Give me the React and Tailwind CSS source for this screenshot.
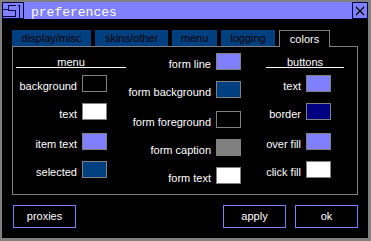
const swatch = "w-[25px] h-[17px] border border-[#808080] shrink-0";

const Row = ({ label, color, labelW, mt }) => (
  <div className={`flex items-end ${mt}`}>
    <span className={`${labelW} text-right leading-[12px] text-white`}>{label}</span>
    <div className={`${swatch} ml-[5px]`} style={{ background: color }} />
  </div>
);

const Logo = () => (
  <svg width="22" height="17" viewBox="0 0 22 17" className="shrink-0">
    <g stroke="#000040" strokeWidth="1" fill="none" shapeRendering="crispEdges">
      <path d="M0.5 0.5 H21.5 V16.5 H0.5 Z" />
      <path d="M0.5 7.5 H5.5" />
      <path d="M13.5 3.5 H6.5 V8.5 H13.5 V14.5 H0.5" />
      <path d="M15.5 3.5 H17.5 V16.5" />
    </g>
  </svg>
);

export default function App() {
  return (
    <div className="w-[371px] h-[241px] bg-[#808080] pl-[2px] pt-[2px] pr-[3px] pb-[3px] font-['Liberation_Sans',Arial,sans-serif] text-[11px]">
      <div className="w-full h-full bg-black flex flex-col">
        {/* title bar */}
        <div className="h-[17px] bg-[#8080ff] flex items-start shrink-0">
          <Logo />
          <span className="ml-[7px] mt-[3px] leading-[15px] text-white text-[13px] font-['Liberation_Mono',monospace]">
            preferences
          </span>
          <div className="ml-auto w-[16px] h-[17px] border border-[#000040] flex items-center justify-center">
            <svg width="10" height="10" viewBox="0 0 10 10">
              <path d="M1 1 L9 9 M9 1 L1 9" stroke="#000" strokeWidth="1.3" />
            </svg>
          </div>
        </div>

        {/* tabs */}
        <div className="flex items-end gap-[4px] ml-[10px] mt-[11px] h-[16px] relative z-10">
          <div className="w-[79px] h-[16px] bg-[#004080] text-black flex items-center justify-center">display/misc</div>
          <div className="w-[73px] h-[16px] bg-[#004080] text-black flex items-center justify-center">skins/other</div>
          <div className="w-[45px] h-[16px] bg-[#004080] text-black flex items-center justify-center">menu</div>
          <div className="w-[54px] h-[16px] bg-[#004080] text-black flex items-center justify-center">logging</div>
          <div className="w-[51px] h-[17px] mb-[-1px] bg-black border border-b-0 border-[#808080] text-white flex items-center justify-center">colors</div>
        </div>

        {/* panel */}
        <div className="ml-[10px] w-[346px] h-[149px] border border-[#808080] flex shrink-0">
          <div className="ml-[3px] w-[110px] mt-[6px]">
            <div className="h-[15px] pt-[3px] leading-[12px] border-b border-white text-white text-center">menu</div>
            <Row label="background" color="#000000" labelW="w-[61px]" mt="mt-[7px]" />
            <Row label="text" color="#ffffff" labelW="w-[61px]" mt="mt-[11px]" />
            <Row label="item text" color="#8080ff" labelW="w-[61px]" mt="mt-[13px]" />
            <Row label="selected" color="#004080" labelW="w-[61px]" mt="mt-[11px]" />
          </div>
          <div className="w-[115px] mt-[6px]">
            <Row label="form line" color="#8080ff" labelW="w-[85px]" mt="mt-0" />
            <Row label="form background" color="#004080" labelW="w-[85px]" mt="mt-[11px]" />
            <Row label="form foreground" color="#000000" labelW="w-[85px]" mt="mt-[13px]" />
            <Row label="form caption" color="#808080" labelW="w-[85px]" mt="mt-[11px]" />
            <Row label="form text" color="#ffffff" labelW="w-[85px]" mt="mt-[11px]" />
          </div>
          <div className="ml-[25px] w-[78px] mt-[6px]">
            <div className="h-[15px] pt-[3px] leading-[12px] border-b border-white text-white text-center">buttons</div>
            <Row label="text" color="#8080ff" labelW="w-[35px]" mt="mt-[7px]" />
            <Row label="border" color="#000080" labelW="w-[35px]" mt="mt-[11px]" />
            <Row label="over fill" color="#8080ff" labelW="w-[35px]" mt="mt-[13px]" />
            <Row label="click fill" color="#ffffff" labelW="w-[35px]" mt="mt-[11px]" />
          </div>
        </div>

        {/* buttons */}
        <div className="flex mt-[10px] ml-[11px] mr-[10px]">
          <button className="w-[63px] h-[23px] border border-[#8080ff] text-white">proxies</button>
          <button className="ml-auto w-[63px] h-[23px] border border-[#8080ff] text-white">apply</button>
          <button className="ml-[9px] w-[63px] h-[23px] border border-[#8080ff] text-white">ok</button>
        </div>
      </div>
    </div>
  );
}
